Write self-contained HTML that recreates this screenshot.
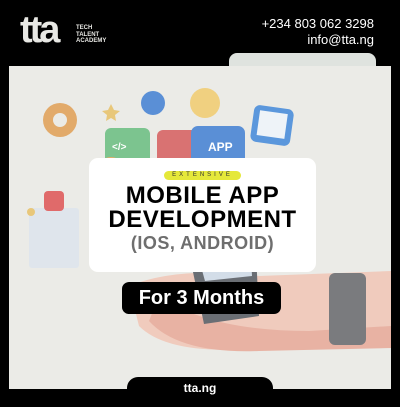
<!DOCTYPE html><html><head><style>
body{margin:0;width:400px;height:400px;background:#000;position:relative;overflow:hidden;font-family:"Liberation Sans",sans-serif}
.a{position:absolute}
</style></head><body>
<div class="a" style="left:20px;top:12px;color:#e8e8e4;font-weight:bold;font-size:38px;letter-spacing:-3px;line-height:36px">tta</div>
<div class="a" style="left:76px;top:25px;color:#e8e8e4;font-weight:bold;font-size:6px;line-height:6.5px">TECH<br>TALENT<br>ACADEMY</div>
<div class="a" style="right:26px;top:16px;color:#fff;font-size:13px;line-height:16px;text-align:right">+234 803 062 3298<br>info@tta.ng</div>
<div class="a" style="left:229px;top:53px;width:147px;height:20px;background:#dfe3df;border-radius:8px 8px 0 0"></div>
<div class="a" style="left:9px;top:66px;width:382px;height:323px;background:#ebebe7"></div>
<svg class="a" style="left:9px;top:66px" width="382" height="323">
<path d="M120 220 Q170 200 250 210 L382 205 L382 280 L250 282 Q160 290 130 260 Z" fill="#f0cbbd"/>
<path d="M150 230 Q200 265 300 265 L382 260 L382 282 L250 285 Q170 288 140 255Z" fill="#e8b2a3"/>
<rect x="320" y="207" width="37" height="72" rx="6" fill="#7a7b7e"/>
<path d="M170 140 L245 145 L250 250 L195 258 Z" fill="#6a6e74"/>
<path d="M178 150 L240 152 L243 210 L196 215 Z" fill="#d3dde8"/>
<circle cx="51" cy="54" r="17" fill="#e2aa6a"/><circle cx="51" cy="54" r="7" fill="#ebebe7"/>
<path d="M102 38 l3 6 6 1 -5 4 1 6 -5 -3 -5 3 1 -6 -5 -4 6 -1z" fill="#e8c77a"/>
<circle cx="144" cy="37" r="12" fill="#5a8fd6"/>
<circle cx="196" cy="37" r="15" fill="#f0d080"/>
<rect x="243" y="41" width="40" height="37" rx="6" fill="#5b97dc" transform="rotate(8 263 60)"/>
<rect x="249" y="46" width="28" height="25" fill="#eef3f8" transform="rotate(8 263 60)"/>
<rect x="96" y="62" width="45" height="38" rx="6" fill="#7cc48f"/>
<text x="103" y="84" font-size="10" fill="#fff" font-weight="bold" font-family="Liberation Sans">&lt;/&gt;</text>
<rect x="148" y="64" width="40" height="40" rx="6" fill="#d97272"/>
<rect x="182" y="60" width="54" height="40" rx="7" fill="#5a8fd6"/>
<text x="199" y="85" font-size="12" fill="#fff" font-weight="bold" font-family="Liberation Sans">APP</text>
<rect x="20" y="142" width="50" height="60" rx="3" fill="#dfe5ec"/>
<circle cx="22" cy="146" r="4" fill="#e8c77a"/>
<rect x="35" y="125" width="20" height="20" rx="4" fill="#e06a6a"/>
<circle cx="102" cy="105" r="14" fill="#e2ad6a"/>
</svg>
<div class="a" style="left:89px;top:158px;width:227px;height:114px;background:#fff;border-radius:9px;text-align:center">
<div style="display:inline-block;margin-top:13px;background:#e5e83a;border-radius:6px;padding:0 8px;font-size:6px;letter-spacing:3px;line-height:9px;color:#333">EXTENSIVE</div>
<div style="font-weight:bold;font-size:24px;line-height:24px;margin-top:3px;color:#000;letter-spacing:0.5px">MOBILE APP<br>DEVELOPMENT</div>
<div style="font-weight:bold;font-size:18px;line-height:22px;color:#6e6e6e;letter-spacing:0.5px">(IOS, ANDROID)</div>
</div>
<div class="a" style="left:122px;top:282px;width:159px;height:32px;background:#000;border-radius:7px;color:#fff;font-weight:bold;font-size:20px;line-height:32px;text-align:center">For 3 Months</div>
<div class="a" style="left:127px;top:377px;width:146px;height:30px;background:#000;border-radius:11px 11px 0 0;color:#fff;font-weight:bold;font-size:12px;line-height:22px;text-align:center">tta.ng</div>
</body></html>
